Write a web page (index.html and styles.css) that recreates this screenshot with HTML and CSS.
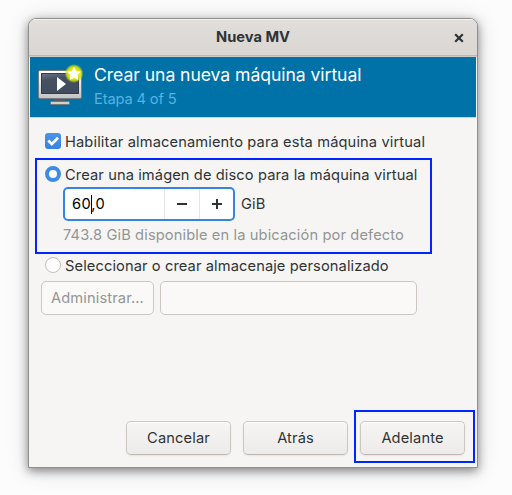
FILE: index.html
```html
<!DOCTYPE html>
<html lang="es">
<head>
<meta charset="utf-8">
<title>Nueva MV</title>
<link rel="stylesheet" href="styles.css">
</head>
<body>
<main class="window">
  <header class="titlebar">
    <h1 class="title">Nueva MV</h1>
    <button class="close" aria-label="Cerrar">
      <svg width="10" height="10" viewBox="0 0 10 10"><path d="M1.2 1.2 8.800 8.800M8.800 1.2 1.2 8.800" stroke="#2e3436" stroke-width="2.200"/></svg>
    </button>
  </header>
  <section class="banner">
    <svg class="vm-icon" width="48" height="48" viewBox="0 0 48 48">
      <defs>
        <linearGradient id="frame" x1="0" y1="0" x2="0" y2="1"><stop offset="0" stop-color="#fff"/><stop offset="1" stop-color="#c4c4c4"/></linearGradient>
        <linearGradient id="screen" x1="0" y1="0" x2="0.3" y2="1"><stop offset="0" stop-color="#6b7581"/><stop offset=".35" stop-color="#465062"/><stop offset="1" stop-color="#414c60"/></linearGradient>
        <radialGradient id="glow"><stop offset=".55" stop-color="#e6ec00"/><stop offset=".78" stop-color="#d4e010" stop-opacity=".8"/><stop offset="1" stop-color="#b4d820" stop-opacity="0"/></radialGradient>
      </defs>
      <path d="M18 34h11v5H18z" fill="#555b60"/>
      <rect x="14.500" y="38.500" width="19" height="3" rx="1" fill="#d0d0d0" stroke="#777"/>
      <rect x="2.500" y="7.500" width="43" height="28" rx="1.500" fill="url(#frame)" stroke="#777d80"/>
      <rect x="5.500" y="10.500" width="37" height="20" fill="url(#screen)" stroke="#343d4c"/>
      <path d="M21 14v14l9-7z" fill="#fff"/>
      <circle cx="38" cy="10.500" r="9.500" fill="url(#glow)"/>
      <path d="m38 4.500 1.900 3.900 4.300.6-3.100 3 .7 4.300-3.800-2-3.800 2 .7-4.300-3.100-3 4.300-.6z" fill="#fff" stroke="#fff" stroke-width=".9" stroke-linejoin="round"/>
    </svg>
    <div class="banner-text">
      <h2 class="heading">Crear una nueva máquina virtual</h2>
      <p class="step">Etapa 4 of 5</p>
    </div>
  </section>
  <section class="content">
    <label class="option enable">
      <svg class="mark check" width="16" height="16" viewBox="0 0 16 16"><path d="m3.300 7.500 3.500 3.500 6.200-6.200" fill="none" stroke="#fff" stroke-width="2.700"/></svg>
      <span>Habilitar almacenamiento para esta máquina virtual</span>
    </label>
    <label class="option create">
      <span class="mark radio on"></span>
      <span>Crear una imágen de disco para la máquina virtual</span>
    </label>
    <div class="size-row">
      <div class="spin">
        <div class="value">60<span class="caret"></span>,0</div>
        <button class="spin-btn" aria-label="Menos"><svg width="12" height="12" viewBox="0 0 12 12"><path d="M1 6h10" stroke="#2e3436" stroke-width="2"/></svg></button>
        <button class="spin-btn plus" aria-label="Más"><svg width="12" height="12" viewBox="0 0 12 12"><path d="M1 6h10M6 1v10" stroke="#2e3436" stroke-width="2"/></svg></button>
      </div>
      <span>GiB</span>
    </div>
    <p class="available">743.8 GiB disponible en la ubicación por defecto</p>
    <label class="option custom">
      <span class="mark radio"></span>
      <span>Seleccionar o crear almacenaje personalizado</span>
    </label>
    <div class="path-row">
      <button class="manage" disabled>Administrar...</button>
      <div class="entry"></div>
    </div>
  </section>
  <footer class="actions">
    <button class="btn">Cancelar</button>
    <button class="btn">Atrás</button>
    <button class="btn">Adelante</button>
  </footer>
</main>
<div class="highlight highlight-disk"></div>
<div class="highlight highlight-next"></div>
</body>
</html>
```
FILE: styles.css
```css
* { box-sizing: border-box; }
body {
  margin: 0;
  width: 512px;
  height: 495px;
  overflow: hidden;
  padding: 18px 34px 27px 28px;
  background: #fcfcfc;
  color: #2e3436;
  font: 14.667px/20px Inter, sans-serif;
  letter-spacing: 0.12px;
}
h1, h2, p { margin: 0; font-weight: 400; }
button { font: inherit; letter-spacing: inherit; color: inherit; padding: 0; margin: 0; }
svg { display: block; }
.window {
  width: 450px;
  height: 450px;
  display: flex;
  flex-direction: column;
  border: 1px solid #8e8e8c;
  border-radius: 8px 8px 0 0;
  background: #f6f5f4;
  box-shadow: 0 3px 10px rgba(0,0,0,.42), 0 2px 22px rgba(0,0,0,.16);
  overflow: hidden;
}
.titlebar {
  height: 38px;
  flex: none;
  display: grid;
  grid-template-columns: 36px 1fr 36px;
  align-items: center;
  background: linear-gradient(#e1dedb, #dad6d2);
  border-bottom: 1px solid #d0ccc7;
  box-shadow: inset 0 1px #f6f5f4, inset 0 -1px #bfb8b1;
}
.title { grid-column: 2; text-align: center; font-size: 14.667px; line-height: 20px; margin-top: -2px; font-weight: 700; letter-spacing: 0; }
.close { width: 36px; height: 34px; border: 0; background: none; display: grid; place-items: center; }
.banner {
  height: 61px;
  flex: none;
  display: flex;
  gap: 10px;
  margin: 0 1px;
  padding: 6px 6px 0;
  background: #0072a8;
  border-bottom: 1px solid #cdd0d1;
}
.vm-icon { flex: none; }
.heading { font-size: 17.6px; line-height: 24px; color: #fff; letter-spacing: -0.06px; white-space: nowrap; }
.step { color: #59b1e2; line-height: 20px; margin-top: 2px; letter-spacing: -0.15px; }
.content { padding: 14px 12px 0; flex: 1; }
.option { display: flex; align-items: center; gap: 4px; height: 20px; padding-left: 4px; white-space: nowrap; }
.mark { width: 16px; height: 16px; flex: none; position: relative; top: -1px; }
.check { background: linear-gradient(#4a94e8, #3584e4); border-radius: 3px; }
.radio { border: 1px solid #c5beb7; border-radius: 50%; background: #fff; }
.radio.on { border: 4px solid #3d8be6; }
.create { margin-top: 13px; }
.create, .custom { letter-spacing: 0.1px; }
.size-row { display: flex; align-items: center; gap: 6px; margin: 2px 0 0 22px; height: 34px; }
.spin { width: 172px; height: 34px; display: flex; border: 2px solid #3584e4; border-radius: 5px; background: #fff; }
.value { flex: 1; padding-left: 7px; line-height: 30px; color: #000; letter-spacing: 0.4px; }
.caret { display: inline-block; width: 1px; height: 19px; margin-right: -1px; vertical-align: -5px; background: #000; }
.spin-btn { width: 35px; height: 30px; border: 0; border-left: 1px solid #e8e6e4; background: none; display: grid; place-items: center; }
.plus { width: 34px; }
.available { margin: 4px 0 0 22px; color: #929595; white-space: nowrap; }
.custom { margin-top: 11px; }
.path-row { display: flex; gap: 6px; margin-top: 5px; }
.manage { width: 113px; height: 34px; border: 1px solid #cdc7c2; border-radius: 5px; background: #faf9f8; color: #929595; }
.entry { width: 257px; height: 34px; border: 1px solid #cdc7c2; border-radius: 5px; background: #faf9f8; }
.actions { display: flex; justify-content: flex-end; gap: 12px; padding: 0 12px 12px 0; }
.btn {
  width: 105px;
  height: 34px;
  border: 1px solid #cdc7c2;
  border-bottom-color: #bfb8b1;
  border-radius: 5px;
  background: linear-gradient(#f6f5f4, #edebe9);
  box-shadow: inset 0 1px #fff, 0 1px 2px rgba(0,0,0,.07);
}
.highlight { position: absolute; border: 2px solid #0026ff; }
.highlight-disk { left: 35px; top: 158px; width: 397px; height: 96px; }
.highlight-next { left: 354px; top: 410px; width: 121px; height: 53px; }
```
